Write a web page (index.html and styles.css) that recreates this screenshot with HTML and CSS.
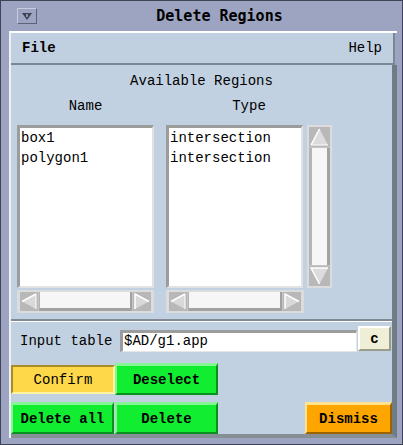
FILE: index.html
```html
<!DOCTYPE html>
<html>
<head>
<meta charset="utf-8">
<title>Delete Regions</title>
<link rel="stylesheet" href="styles.css">
</head>
<body>
<div class="window">
  <div class="titlebar">
    <div class="winmenu">
      <svg width="12" height="9" viewBox="0 0 12 9"><polygon points="1,1 11,1 6,8" fill="#3d4255"/><line x1="6" y1="2" x2="6" y2="5" stroke="#c9cde0" stroke-width="1.2"/></svg>
    </div>
    <div class="title">Delete Regions</div>
  </div>
  <div class="client">
    <div class="menubar"><span class="menu-file">File</span><span>Help</span></div>
    <div class="panel">
      <div class="heading">Available Regions</div>
      <div class="cols">
        <div class="col col-name">
          <div class="label">Name</div>
          <div class="list">
            <div class="item">box1</div>
            <div class="item">polygon1</div>
          </div>
          <div class="hscroll">
            <div class="harrow"><svg width="18" height="19" viewBox="0 0 18 19"><rect width="18" height="19" fill="#b8b8b8"/><polygon points="2,9.5 16,2 16,17" fill="#d9d9d9"/><polyline points="2,9.5 16,2" fill="none" stroke="#fff" stroke-width="1.5"/><polyline points="16,2 16,17" fill="none" stroke="#fff" stroke-width="1"/></svg></div>
            <div class="hthumb"></div>
            <div class="harrow"><svg width="18" height="19" viewBox="0 0 18 19"><rect width="18" height="19" fill="#b8b8b8"/><polygon points="16,9.5 2,2 2,17" fill="#d9d9d9"/><polyline points="2,17 2,2 16,9.5" fill="none" stroke="#fff" stroke-width="1.5"/></svg></div>
          </div>
        </div>
        <div class="col col-type">
          <div class="label">Type</div>
          <div class="listrow">
            <div class="list list-type">
              <div class="item">intersection</div>
              <div class="item">intersection</div>
            </div>
            <div class="vscroll">
              <div class="varrow"><svg width="21" height="20" viewBox="0 0 21 20"><rect width="21" height="20" fill="#b8b8b8"/><polygon points="10.5,2 2,18 19,18" fill="#dcdcdc"/><polyline points="2,18 10.5,2" fill="none" stroke="#fff" stroke-width="1.5"/><polyline points="2,18 19,18" fill="none" stroke="#fff" stroke-width="1"/></svg></div>
              <div class="vthumb"></div>
              <div class="varrow"><svg width="21" height="20" viewBox="0 0 21 20"><rect width="21" height="20" fill="#b8b8b8"/><polygon points="10.5,18 2,2 19,2" fill="#dcdcdc"/><polyline points="19,2 2,2 10.5,18" fill="none" stroke="#fff" stroke-width="1.5"/></svg></div>
            </div>
          </div>
          <div class="hscroll hscroll-type">
            <div class="harrow"><svg width="18" height="19" viewBox="0 0 18 19"><rect width="18" height="19" fill="#b8b8b8"/><polygon points="2,9.5 16,2 16,17" fill="#d9d9d9"/><polyline points="2,9.5 16,2" fill="none" stroke="#fff" stroke-width="1.5"/><polyline points="16,2 16,17" fill="none" stroke="#fff" stroke-width="1"/></svg></div>
            <div class="hthumb"></div>
            <div class="harrow"><svg width="18" height="19" viewBox="0 0 18 19"><rect width="18" height="19" fill="#b8b8b8"/><polygon points="16,9.5 2,2 2,17" fill="#d9d9d9"/><polyline points="2,17 2,2 16,9.5" fill="none" stroke="#fff" stroke-width="1.5"/></svg></div>
          </div>
        </div>
      </div>
      <div class="sep"></div>
      <div class="inputrow">
        <span class="inlabel">Input table</span>
        <div class="field">$AD/g1.app</div>
        <button class="cbtn">c</button>
      </div>
      <div class="btnrow row1">
        <button class="btn btn-confirm">Confirm</button>
        <button class="btn btn-green btn-deselect">Deselect</button>
      </div>
      <div class="btnrow row2">
        <button class="btn btn-green">Delete all</button>
        <button class="btn btn-green">Delete</button>
        <button class="btn btn-dismiss">Dismiss</button>
      </div>
    </div>
  </div>
</div>
</body>
</html>
```

FILE: styles.css
```css
* { box-sizing: border-box; }
html, body { margin: 0; padding: 0; }
body {
  font-family: "Liberation Mono", "DejaVu Sans Mono", monospace;
  font-size: 14px;
  color: #000;
  background: #9ca4c2;
  -webkit-font-smoothing: none;
}
.window {
  width: 403px;
  height: 445px;
  background: #9ca4c2;
  border: 1px solid #3e4358;
  display: flex;
  flex-direction: column;
}
.titlebar {
  height: 30px;
  flex: none;
  display: flex;
  align-items: center;
  padding-left: 16px;
}
.winmenu {
  width: 20px;
  height: 16px;
  border: 1px solid;
  border-color: #c6cbe0 #5c6277 #5c6277 #c6cbe0;
  display: flex;
  align-items: center;
  justify-content: center;
}
.title {
  flex: 1;
  text-align: center;
  font-family: "DejaVu Sans Mono", "Liberation Mono", monospace;
  font-weight: bold;
  font-size: 15px;
}
.client {
  flex: 1;
  margin: 0 5px 6px 8px;
  border-top: 2px solid #ffffff;
  border-left: 2px solid #eef2f7;
  display: flex;
  flex-direction: column;
}
.menubar {
  height: 32px;
  flex: none;
  margin-right: 2px;
  background: #c1d0e0;
  border-right: 2px solid #7b8793;
  border-bottom: 2px solid #7b8793;
  display: flex;
  align-items: center;
  justify-content: space-between;
  padding: 0 11px 0 11px;
}
.menu-file { font-weight: bold; }
.panel {
  flex: 1;
  background: #c2d1e1;
  border-right: 5px solid #6f7c86;
  border-bottom: 4px solid #868e96;
  padding-top: 8px;
  display: flex;
  flex-direction: column;
}
.heading {
  text-align: center;
  line-height: 16px;
  height: 16px;
}
.cols {
  margin-top: 9px;
  padding-left: 6px;
  display: flex;
  gap: 12px;
}
.col { display: flex; flex-direction: column; }
.col-name { width: 137px; }
.col-type { width: 166px; }
.label {
  text-align: center;
  line-height: 16px;
  height: 16px;
  margin-bottom: 11px;
}
.list {
  height: 163px;
  background: #ffffff;
  border-top: 3px solid #9c9c9c;
  border-left: 3px solid #9c9c9c;
  border-right: 2px solid #e2e2e2;
  border-bottom: 2px solid #e2e2e2;
  padding-left: 1px;
}
.item { line-height: 20px; height: 20px; white-space: nowrap; }
.listrow { display: flex; gap: 4px; }
.list-type { width: 138px; }
.vscroll {
  width: 25px;
  height: 163px;
  background: #c4c4c4;
  border: 2px solid #dcdcdc;
  display: flex;
  flex-direction: column;
}
.varrow { height: 20px; flex: none; display: flex; }
.vthumb {
  flex: 1;
  margin: 1px 0;
  background: #f6f6f6;
  border-left: 3px solid #b4b4b4;
  border-right: 3px solid #a2a2a2;
}
.hscroll {
  margin-top: 2px;
  height: 23px;
  width: 137px;
  background: #c4c4c4;
  border: 2px solid #dcdcdc;
  border-left-width: 3px;
  border-right-width: 3px;
  display: flex;
  align-items: stretch;
}
.hscroll-type { width: 138px; }
.harrow { width: 18px; flex: none; display: flex; }
.hthumb {
  flex: 1;
  margin: 0 1px;
  background: #f6f6f6;
  border-bottom: 3px solid #a2a2a2;
  border-right: 2px solid #a2a2a2;
  border-left: 1px solid #b4b4b4;
}
.sep {
  margin-top: 6px;
  height: 3px;
  border-top: 2px solid #7f8a94;
  border-bottom: 1px solid #ffffff;
}
.inputrow {
  margin-top: 4px;
  height: 25px;
  display: flex;
  align-items: flex-start;
  padding-left: 9px;
}
.inlabel {
  width: 92px;
  margin-top: 7px;
  line-height: 16px;
  white-space: nowrap;
}
.field {
  margin-left: 8px;
  margin-top: 4px;
  width: 237px;
  height: 22px;
  background: #ffffff;
  border-top: 3px solid #9c9c9c;
  border-left: 3px solid #9c9c9c;
  border-bottom: 1px solid #e6e6e6;
  border-right: 1px solid #e6e6e6;
  padding-left: 1px;
  line-height: 17px;
  white-space: nowrap;
}
.cbtn {
  margin: 0 0 0 1px;
  padding: 0;
  width: 33px;
  height: 25px;
  font: bold 14px "Liberation Mono", "DejaVu Sans Mono", monospace;
  color: #000;
  background: #efefd7;
  border: 2px solid;
  border-color: #ffffff #9c9c8a #9c9c8a #ffffff;
}
.btnrow { display: flex; align-items: flex-start; }
.row1 { margin-top: 12px; height: 32px; }
.row2 { margin-top: 7px; height: 32px; gap: 1px; }
.btn {
  margin: 0;
  padding: 0;
  height: 32px;
  width: 103px;
  font: bold 14px "Liberation Mono", "DejaVu Sans Mono", monospace;
  color: #000;
  border: 2px solid;
  white-space: nowrap;
}
.btn-green {
  background: #11ee31;
  border-color: #86f594 #0b8f1e #0b8f1e #86f594;
  border-top-width: 3px;
}
.btn-confirm {
  width: 104px;
  height: 29px;
  margin-top: 2px;
  background: #ffd84a;
  font-weight: normal;
  border-color: #a88c28 #fff2a0 #fff2a0 #a88c28;
}
.btn-dismiss {
  width: 87px;
  margin-left: auto;
  background: #ffa500;
  border-color: #ffe38e #9a6400 #9a6400 #ffe38e;
  border-top-width: 3px;
}
```
